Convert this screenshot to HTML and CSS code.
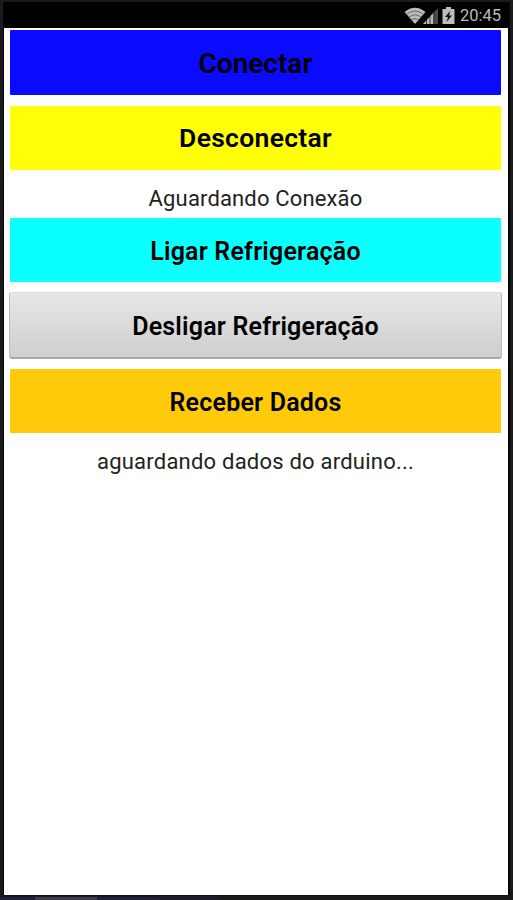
FILE: index.html
```
<!doctype html>
<html lang="pt-BR">
<head>
  <meta charset="UTF-8">
  <title>Controle de Refrigeração</title>
  <meta name="viewport" content="width=device-width, initial-scale=1.0">
  <link rel="stylesheet" href="styles.css">
</head>
<body>

  <div class="tela">
    <header class="status-bar">
      <svg class="wifi" width="22" height="17" viewBox="0 0 22 17">
        <path d="M0.5 5Q11 -3.5 21.5 5L11 17Z" fill="#bcbcbc"/>
        <path d="M2.5 7.4Q11 0.6 19.5 7.4M5 10.2Q11 5.4 17 10.2M7.5 12.8Q11 10.2 14.5 12.8" fill="none" stroke="#5c5c5c" stroke-width="0.9"/>
      </svg>
      <svg class="sinal" width="15" height="16" viewBox="0 0 15 16">
        <path d="M0 16L15 0V16Z" fill="#484848"/>
        <path d="M0 16L10.5 4.8V16Z" fill="#b8b8b8"/>
        <path d="M3.5 11V16M7 7V16M10.8 3V16" stroke="#222" stroke-width="0.8"/>
      </svg>
      <svg class="bateria" width="13" height="17" viewBox="0 0 13 17">
        <path d="M4 0H9V2H12.5V17H0.5V2H4Z" fill="#bebebe"/>
        <path d="M8.5 3.5L3 10H6L4.5 15L10 8.5H7Z" fill="#111"/>
      </svg>
      <span class="hora">20:45</span>
    </header>

    <main class="conteudo">
      <button class="botao azul">Conectar</button>
      <button class="botao amarelo">Desconectar</button>
      <p class="texto conexao">Aguardando Conexão</p>
      <button class="botao ciano">Ligar Refrigeração</button>
      <button class="botao padrao">Desligar Refrigeração</button>
      <button class="botao laranja">Receber Dados</button>
      <p class="texto dados">aguardando dados do arduino...</p>
    </main>
  </div>

  <div class="rodape"></div>

</body>
</html>
```
FILE: styles.css
```
* {
  box-sizing: border-box;
}
body {
  margin: 0;
  padding: 2px 3px 0 4px;
  height: 900px;
  overflow: hidden;
  background: #1a1a1c;
  font-family: Roboto, sans-serif;
  color: #000;
}
.tela {
  height: 893px;
  background: #fff;
  border-right: 2px solid #050505;
  box-shadow: -1px 0 0 #050505, 0 1px 0 #101214;
}

/* barra de status */
.status-bar {
  display: flex;
  align-items: center;
  justify-content: flex-end;
  height: 26px;
  padding-right: 7px;
  background: #000;
}
.wifi {
  margin-right: -3px;
}
.sinal {
  margin: 1px 4px 0 0;
}
.bateria {
  margin-right: 5px;
}
.hora {
  color: #bcbcbc;
  font-size: 16.5px;
  line-height: 27px;
}

.conteudo {
  padding: 2px 7px 0 6px;
}
.botao {
  display: block;
  width: 100%;
  height: 65px;
  margin: 0 0 11px;
  padding: 0;
  border: 0;
  border-radius: 1px;
  font-family: inherit;
  font-size: 25px;
  font-weight: 600;
  letter-spacing: 0.2px;
  line-height: 67px;
}
.azul {
  background: #0a0aff;
  font-size: 28px;
  letter-spacing: 0;
}
.amarelo {
  height: 64px;
  margin-bottom: 0;
  background: #ffff0a;
  font-size: 26.5px;
  letter-spacing: 0.3px;
  line-height: 64px;
}
.ciano {
  height: 64px;
  margin-bottom: 10px;
  background: #0affff;
}
.padrao {
  width: auto;
  min-width: calc(100% + 2px);
  height: 67px;
  margin: 0 -1px 10px;
  border: 1px solid #bbb;
  border-top-color: #ddd;
  border-bottom: 2px solid #a9a9ab;
  border-radius: 3px;
  background: linear-gradient(#e7e7e7, #cecece);
  line-height: 68px;
}
.laranja {
  height: 64px;
  margin-bottom: 0;
  background: #ffca0a;
}

.texto {
  margin: 0;
  height: 48px;
  color: #222;
  font-size: 22px;
  letter-spacing: 0.15px;
  line-height: 57px;
  text-align: center;
  white-space: nowrap;
}
.dados {
  letter-spacing: 0.22px;
}

.rodape {
  width: 62px;
  height: 3px;
  margin: 2px 0 0 31px;
  background: #3b3b4a;
  box-shadow: -35px 0 0 #1e1e38, 62px 0 0 #1e1e38, 124px 0 0 #1c1c2c;
}
```
